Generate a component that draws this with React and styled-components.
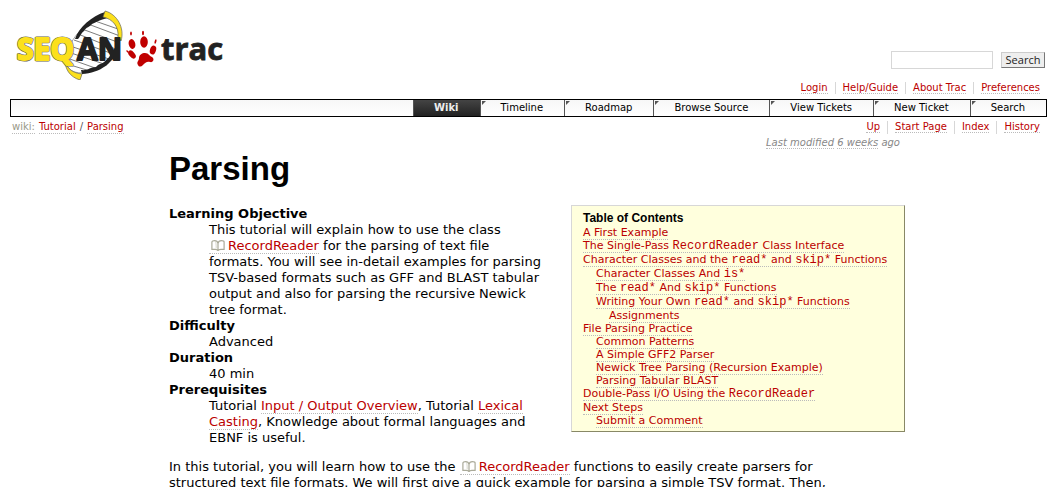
import React from "react";
import styled, { createGlobalStyle, css } from "styled-components";

const GlobalStyle = createGlobalStyle`
  * { box-sizing: border-box; }
  body {
    margin: 0;
    background: #fff;
    color: #000;
    font: 13px/16px Verdana, "DejaVu Sans", sans-serif;
  }
`;

const Link = styled.a`
  color: ${(p) => (p.$muted ? "#998" : "#b00")};
  text-decoration: none;
  border-bottom: 1px dotted #bbb;
`;

const RefLink = styled(Link)`
  white-space: nowrap;
`;

const Page = styled.div`
  padding: 8px 10px 0;
`;

const Header = styled.header`
  display: flex;
  justify-content: space-between;
  align-items: flex-end;
`;

const LogoLink = styled.a`
  display: block;
  height: 74px;
`;

const SearchForm = styled.form`
  display: flex;
  align-items: center;
  gap: 8px;
  padding: 0 2px 13px 0;
`;

const SearchInput = styled.input`
  width: 102px;
  height: 18px;
  margin: 0;
  padding: 0 4px;
  border: 1px solid #d7d7d7;
  font: inherit;
`;

const SearchButton = styled.button`
  height: 16px;
  width: 44px;
  margin: 0;
  padding: 0;
  border: 1px solid;
  border-color: #ccc #777 #777 #ccc;
  background: #eee;
  color: #222;
  font: 11px/12px "Open Sans", sans-serif;
`;

const LinkBar = styled.ul`
  display: flex;
  justify-content: flex-end;
  margin: 0;
  padding: 0 7px 0 0;
  list-style: none;
  font-size: 10px;
  line-height: 12px;
`;

const LinkItem = styled.li`
  padding: 0 7px;
  border-right: 1px solid #d7d7d7;
  &:last-child {
    padding-right: 0;
    border-right: 0;
  }
`;

const MainNav = styled.nav`
  margin-top: 5px;
  height: 18px;
  border: 1px solid #000;
  background: linear-gradient(#f7f7f7, #fff);
  font-size: 10px;
  line-height: 16px;
`;

const Tabs = styled.ul`
  display: flex;
  justify-content: flex-end;
  margin: 0;
  padding: 0;
  list-style: none;
`;

const Tab = styled.li`
  position: relative;
  border-left: 1px solid #555;
  &::before {
    content: "";
    position: absolute;
    top: 1px;
    left: 1px;
    border-top: 4px solid #555;
    border-right: 4px solid transparent;
  }
  ${(p) =>
    p.$active &&
    css`
      background: linear-gradient(#444, #222);
      font-weight: bold;
      &::before { display: none; }
    `}
`;

const TabLink = styled.a`
  display: block;
  padding: 0 21px 0 20px;
  color: ${(p) => (p.$active ? "#eee" : "#000")};
  text-decoration: none;
`;

const ContextRow = styled.div`
  display: flex;
  justify-content: space-between;
  padding: 4px 0 0 2px;
  font-size: 10px;
  line-height: 12px;
`;

const Crumbs = styled.nav`
  display: flex;
  gap: 4px;
  color: #555;
`;

const Content = styled.main`
  padding: 0 142px 0 159px;
`;

const Modified = styled.p`
  margin: 3px 5px 0 0;
  text-align: right;
  font-size: 10px;
  line-height: 12px;
  font-style: italic;
  color: #888;
  a { color: #888; }
`;

const Title = styled.h1`
  margin: 0 0 16px;
  font: bold 33px/40px Arial, "Liberation Sans", sans-serif;
`;

const Columns = styled.div`
  display: flex;
  align-items: flex-start;
  justify-content: space-between;
  gap: 10px;
`;

const Facts = styled.dl`
  flex: 1;
  margin: 0;
  padding-top: 1px;
  dt { font-weight: bold; }
  dd { margin: 0 0 0 40px; }
`;

const Toc = styled.nav`
  flex: none;
  width: 334px;
  padding: 5px 11px 4px;
  border: 1px solid;
  border-color: #d7d7d7 #886 #886 #d7d7d7;
  background: #ffd;
  font-size: 11px;
  line-height: 13px;
  code { font: 12px/13px "Courier New", "Liberation Mono", monospace; }
`;

const TocTitle = styled.h4`
  margin: 0;
  font: bold 12px/15px Arial, "Liberation Sans", sans-serif;
`;

const TocList = styled.ol`
  margin: 0;
  padding: 0;
  list-style: none;
`;

const TocItem = styled.li`
  padding-left: ${(p) => p.$level * 13}px;
  line-height: ${(p) => (p.$tall ? 14 : 13)}px;
  white-space: nowrap;
`;

const Paragraph = styled.p`
  margin: 13px 0 0;
`;

const BookSvg = styled.svg`
  margin: 0 3px 0 2px;
  vertical-align: -1px;
`;

const Book = () => (
  <BookSvg width="14" height="11" viewBox="0 0 14 11" fill="none" stroke="#aa9" strokeWidth="1.2" aria-hidden="true">
    <path d="M7 10.800V3.500C6.600 1.600 5.200 .7 3.500 .7C2 .7 .9 1.200 .9 2V9.300H4.200M7 3.500C7.400 1.600 8.800 .7 10.500 .7C12 .7 13.100 1.200 13.100 2V9.300H9.800M4.200 9.300C5.600 9.300 6.600 9.800 7 10.700C7.400 9.800 8.400 9.300 9.800 9.300" />
    <path d="M4.300 1.200C5 2.500 5.200 4.500 5.200 8.500" stroke="#ccb" strokeWidth=".8" />
  </BookSvg>
);

const Logo = () => (
  <svg width="220" height="72" viewBox="10 8 220 72" role="img" aria-label="SeqAn trac">
    <path d="M66 62C66 46 78 26 104 14C116 20 121 31 119 44C113 62 99 70 82 73C73 73 67 69 66 62Z" fill="#fff" stroke="#666" strokeWidth=".6" />
    <path d="M95 21L118 29M88 24L120 36M82 29L120 43M78 34L118 50M74 40L116 55M70 46L112 60M68 52L107 65M67 58L98 69M67 64L90 71" stroke="#444" strokeWidth=".7" />
    <path d="M75 39C79 27 92 16 105 12L108 18C99 20 97 22 92 24C90 27 86 27 84 31C81 33 80 37 78 39Z" fill="#222" />
    <path d="M119 45C115 63 100 73 82 74L81 70C88 71 90 67 96 67C99 63 104 64 107 59C111 57 110 52 113 50Z" fill="#222" />
    <path d="M105 11C117 14 125 28 121 41L118 37C119 27 113 19 103 17Z" fill="#fce01c" stroke="#665" strokeWidth=".7" />
    <path d="M65 57C65 67 71 73 82 74L80 80C70 77 64 69 65 57Z" fill="#fce01c" stroke="#665" strokeWidth=".7" />
    <g fontFamily="Open Sans" fontWeight="700" fontSize="30" strokeLinejoin="round">
      <text x="17" y="60" fill="none" stroke="#665" strokeWidth="3">SEQ</text>
      <text x="17" y="60" fill="#fce01c" stroke="#fce01c" strokeWidth="1.800">SEQ</text>
      <text x="77" y="60" fill="#222" stroke="#222" strokeWidth="1.800">AN</text>
    </g>
    <g fill="#c00000">
      <ellipse cx="132" cy="44" rx="3.300" ry="5" transform="rotate(-14 132 44)" />
      <ellipse cx="144" cy="42" rx="3.800" ry="5.700" />
      <ellipse cx="153" cy="50" rx="3" ry="4.600" transform="rotate(18 153 50)" />
      <ellipse cx="132" cy="54.500" rx="2.800" ry="4.700" transform="rotate(-42 132 54.500)" />
      <ellipse cx="131" cy="33.500" rx=".9" ry="2" />
      <ellipse cx="143" cy="33" rx="1" ry="2.200" />
      <ellipse cx="155.500" cy="41.500" rx=".9" ry="2.200" transform="rotate(15 155.500 41.500)" />
      <ellipse cx="127.500" cy="51.500" rx=".8" ry="1.500" transform="rotate(-40 127.500 51.500)" />
      <path d="M138 65C136 62 139 61 139 58C139 55 142 53 145 53C149 53 149 56 152 57C155 59 153 63 150 62C147 61 145 63 143 65C141 67 139 67 138 65Z" />
    </g>
    <text x="161" y="60" fontFamily="Open Sans" fontWeight="700" fontSize="31" fill="#222" stroke="#222" strokeWidth=".8">trac</text>
  </svg>
);

const metaLinks = ["Login", "Help/Guide", "About Trac", "Preferences"];
const tabs = ["Wiki", "Timeline", "Roadmap", "Browse Source", "View Tickets", "New Ticket", "Search"];
const contextLinks = ["Up", "Start Page", "Index", "History"];

const toc = [
  [0, "A First Example"],
  [0, "The Single-Pass `RecordReader` Class Interface"],
  [0, "Character Classes and the `read*` and `skip*` Functions"],
  [1, "Character Classes And `is*`"],
  [1, "The `read*` And `skip*` Functions"],
  [1, "Writing Your Own `read*` and `skip*` Functions"],
  [2, "Assignments"],
  [0, "File Parsing Practice"],
  [1, "Common Patterns"],
  [1, "A Simple GFF2 Parser"],
  [1, "Newick Tree Parsing (Recursion Example)"],
  [1, "Parsing Tabular BLAST"],
  [0, "Double-Pass I/O Using the `RecordReader`"],
  [0, "Next Steps"],
  [1, "Submit a Comment"],
];

const withCode = (text) =>
  text.split("`").map((part, i) => (i % 2 ? <code key={i}>{part}</code> : part));

const Links = ({ items }) => (
  <LinkBar>
    {items.map((item) => (
      <LinkItem key={item}><Link href="#">{item}</Link></LinkItem>
    ))}
  </LinkBar>
);

export default function App() {
  return (
    <>
      <GlobalStyle />
      <Page>
        <Header>
          <LogoLink href="#"><Logo /></LogoLink>
          <SearchForm role="search">
            <SearchInput type="text" aria-label="Search" />
            <SearchButton type="button">Search</SearchButton>
          </SearchForm>
        </Header>
        <Links items={metaLinks} />
        <MainNav>
          <Tabs>
            {tabs.map((tab, i) => (
              <Tab key={tab} $active={i === 0}>
                <TabLink href="#" $active={i === 0}>{tab}</TabLink>
              </Tab>
            ))}
          </Tabs>
        </MainNav>
        <ContextRow>
          <Crumbs>
            <Link href="#" $muted>wiki:</Link>
            <Link href="#">Tutorial</Link>
            <span>/</span>
            <Link href="#">Parsing</Link>
          </Crumbs>
          <Links items={contextLinks} />
        </ContextRow>
        <Content>
          <Modified><Link href="#">Last modified</Link> <Link href="#">6 weeks</Link> ago</Modified>
          <Title>Parsing</Title>
          <Columns>
            <Facts>
              <dt>Learning Objective</dt>
              <dd>
                This tutorial will explain how to use the class<br />
                <RefLink href="#"><Book />RecordReader</RefLink> for the parsing of text file<br />
                formats. You will see in-detail examples for parsing<br />
                TSV-based formats such as GFF and BLAST tabular<br />
                output and also for parsing the recursive Newick<br />
                tree format.
              </dd>
              <dt>Difficulty</dt>
              <dd>Advanced</dd>
              <dt>Duration</dt>
              <dd>40 min</dd>
              <dt>Prerequisites</dt>
              <dd>
                Tutorial <Link href="#">Input / Output Overview</Link>, Tutorial <Link href="#">Lexical<br />
                Casting</Link>, Knowledge about formal languages and<br />
                EBNF is useful.
              </dd>
            </Facts>
            <Toc>
              <TocTitle>Table of Contents</TocTitle>
              <TocList>
                {toc.map(([level, text]) => (
                  <TocItem key={text} $level={level} $tall={text.includes("`")}>
                    <Link href="#">{withCode(text)}</Link>
                  </TocItem>
                ))}
              </TocList>
            </Toc>
          </Columns>
          <Paragraph>
            In this tutorial, you will learn how to use the <RefLink href="#"><Book />RecordReader</RefLink> functions
            to easily create parsers for<br />
            structured text file formats. We will first give a quick example for parsing a simple TSV format. Then,
          </Paragraph>
        </Content>
      </Page>
    </>
  );
}
